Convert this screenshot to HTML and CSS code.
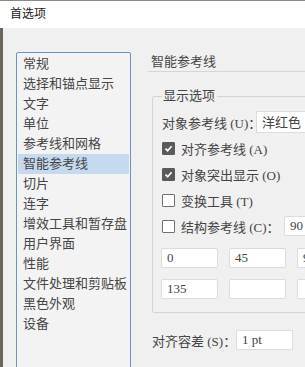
FILE: index.html
```html
<!DOCTYPE html>
<html lang="zh-CN">
<head>
  <meta charset="UTF-8">
  <meta name="viewport" content="width=device-width, initial-scale=1.0">
  <title>首选项</title>
  <link rel="stylesheet" href="styles.css">
</head>
<body>
  <div class="window">
    <div class="titlebar">首选项</div>

    <div class="content">
      <ul class="nav">
        <li>常规</li>
        <li>选择和锚点显示</li>
        <li>文字</li>
        <li>单位</li>
        <li>参考线和网格</li>
        <li class="selected">智能参考线</li>
        <li>切片</li>
        <li>连字</li>
        <li>增效工具和暂存盘</li>
        <li>用户界面</li>
        <li>性能</li>
        <li>文件处理和剪贴板</li>
        <li>黑色外观</li>
        <li>设备</li>
      </ul>

      <div class="panel">
        <div class="panel-title">智能参考线</div>

        <fieldset class="group">
          <legend>显示选项</legend>

          <div class="row">
            <span class="label">对象参考线 (U)：</span>
            <div class="select">洋红色</div>
          </div>
          <div class="row">
            <span class="box on"><svg width="9" height="9" viewBox="0 0 9 9"><path d="M1.5 4.6 L3.6 6.7 L7.6 2.2" fill="none" stroke="#fff" stroke-width="1.7"/></svg></span>
            对齐参考线 (A)
          </div>
          <div class="row">
            <span class="box on"><svg width="9" height="9" viewBox="0 0 9 9"><path d="M1.5 4.6 L3.6 6.7 L7.6 2.2" fill="none" stroke="#fff" stroke-width="1.7"/></svg></span>
            对象突出显示 (O)
          </div>
          <div class="row">
            <span class="box"></span>
            变换工具 (T)
          </div>
          <div class="row">
            <span class="construct"><span class="box"></span>结构参考线 (C)：</span>
            <div class="field short">90</div>
          </div>

          <div class="angles">
            <div class="field">0</div>
            <div class="field">45</div>
            <div class="field">90</div>
            <div class="field">135</div>
            <div class="field"></div>
            <div class="field"></div>
          </div>
        </fieldset>

        <div class="row tolerance">
          <span class="tol-label">对齐容差 (S)：</span>
          <div class="field">1 pt</div>
        </div>
      </div>
    </div>
  </div>
</body>
</html>
```

FILE: styles.css
```css
html, body {
  margin: 0;
  padding: 0;
  height: 100%;
  overflow: hidden;
}
body {
  font-family: "Liberation Serif", "Noto Sans CJK SC", serif;
  font-size: 13px;
  color: #444;
  background: #f0f0f0;
}
.window {
  border-top: 1px solid #8a8a8a;
  height: 366px;
}
.titlebar {
  background: #fff;
  height: 27px;
  line-height: 27px;
  padding-left: 10px;
  font-size: 12px;
  color: #1a1a1a;
}
.content {
  display: flex;
  height: 339px;
  border-left: 3px solid #6b665c;
}

/* left category list */
.nav {
  list-style: none;
  margin: 24px 0 0 13px;
  padding: 1px;
  width: 111px;
  height: 340px;
  flex-shrink: 0;
  border: 1px solid #6a93c4;
  border-radius: 2px;
  background: #f3f3f3;
}
.nav li {
  height: 20px;
  line-height: 20px;
  padding-left: 5px;
  white-space: nowrap;
  color: #454545;
}
.nav li.selected {
  background: #c5d9ef;
}

/* right panel */
.panel {
  flex: 1;
  min-width: 0;
  margin-left: 17px;
}
.panel-title {
  margin-top: 25px;
  line-height: 18px;
  padding-left: 3px;
  border-bottom: 1px solid #d6d6d6;
}
.group {
  margin: 16px 0 0 4px;
  padding: 5px 0 13px 9px;
  width: 200px;
  border: 1px solid #d4d4d4;
  border-radius: 2px;
}
.group legend {
  padding: 0 2px 0 1px;
  line-height: 16px;
}
.row {
  display: flex;
  align-items: center;
  height: 26px;
  white-space: nowrap;
}
.label {
  width: 94px;
}
.select {
  height: 22px;
  line-height: 22px;
  box-sizing: border-box;
  padding-left: 5px;
  width: 80px;
  border: 1px solid #dcdcdc;
  background: #fff;
}
.box {
  display: inline-flex;
  align-items: center;
  justify-content: center;
  width: 11px;
  height: 11px;
  margin-right: 6px;
  border: 1px solid #707070;
  border-radius: 1px;
  background: #fff;
}
.box.on {
  background: #5a5a5a;
  border-color: #5a5a5a;
}
.construct {
  display: flex;
  align-items: center;
  width: 122px;
}
.field {
  box-sizing: border-box;
  height: 20px;
  line-height: 18px;
  padding-left: 5px;
  border: 1px solid #dcdcdc;
  border-radius: 2px;
  background: #fff;
  white-space: pre;
}
.field.short {
  width: 40px;
}
.angles {
  display: grid;
  grid-template-columns: repeat(3, 57px);
  column-gap: 11px;
  row-gap: 11px;
  margin-top: 9px;
  margin-left: -1px;
}
.tolerance {
  margin-top: 17px;
  padding-left: 4px;
  height: 20px;
}
.tol-label {
  width: 84px;
}
.tolerance .field {
  width: 57px;
}
```
